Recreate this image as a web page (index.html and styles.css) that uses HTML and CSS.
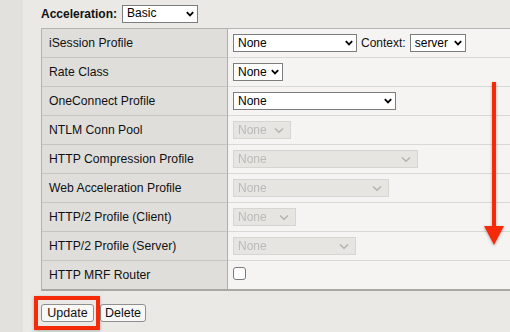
FILE: index.html
```html
<!DOCTYPE html>
<html>
<head>
<meta charset="utf-8">
<link rel="stylesheet" href="styles.css">
</head>
<body>
<div class="page">
  <div class="strip"></div>
  <div class="main">
    <div class="head">
      <span class="head-label">Acceleration:</span>
      <select class="sel w76 basic"><option>Basic</option></select>
    </div>
    <div class="grid">
      <div class="lbl">iSession Profile</div>
      <div class="val">
        <select class="sel w124"><option>None</option></select>
        <span class="ctx">Context:</span>
        <select class="sel w56"><option>server</option></select>
      </div>
      <div class="lbl">Rate Class</div>
      <div class="val"><select class="sel w50"><option>None</option></select></div>
      <div class="lbl">OneConnect Profile</div>
      <div class="val"><select class="sel w163"><option>None</option></select></div>
      <div class="lbl">NTLM Conn Pool</div>
      <div class="val"><select class="sel dis w58" disabled><option>None</option></select></div>
      <div class="lbl">HTTP Compression Profile</div>
      <div class="val"><select class="sel dis w185" disabled><option>None</option></select></div>
      <div class="lbl">Web Acceleration Profile</div>
      <div class="val"><select class="sel dis w156" disabled><option>None</option></select></div>
      <div class="lbl">HTTP/2 Profile (Client)</div>
      <div class="val"><select class="sel dis w63" disabled><option>None</option></select></div>
      <div class="lbl">HTTP/2 Profile (Server)</div>
      <div class="val"><select class="sel dis w123" disabled><option>None</option></select></div>
      <div class="lbl last">HTTP MRF Router</div>
      <div class="val last"><input type="checkbox" class="chk"></div>
    </div>
    <div class="buttons">
      <span class="highlight"><button class="btn w53">Update</button></span>
      <button class="btn w46">Delete</button>
    </div>
  </div>
  <svg class="arrow" width="24" height="168" viewBox="0 0 24 168">
    <rect x="10" y="0" width="4" height="146" fill="#f52a08"/>
    <polygon points="2,144 22,144 12,163" fill="#f52a08"/>
  </svg>
</div>
</body>
</html>
```
FILE: styles.css
```css
html, body {
  margin: 0;
  padding: 0;
  width: 510px;
  height: 332px;
  overflow: hidden;
  background: #eae9e5;
  font-family: "Liberation Sans", Arial, sans-serif;
  font-size: 12px;
  color: #111;
}
.page {
  position: relative;
  display: flex;
  height: 332px;
}
.strip {
  width: 23px;
  flex: none;
  background: #e2e1de;
}
.main {
  padding-left: 18px;
  flex: none;
}
.head {
  display: flex;
  align-items: center;
  gap: 5px;
  height: 18px;
  margin-top: 5px;
  margin-bottom: 5px;
}
.head-label {
  font-weight: bold;
  font-size: 12px;
}
.grid {
  display: grid;
  grid-template-columns: 186px 300px;
  border-top: 1px solid #b4b3af;
  border-left: 1px solid #b4b3af;
  border-bottom: 2px solid #a9a8a4;
  width: 486px;
}
.lbl, .val {
  height: 29px;
  box-sizing: border-box;
  display: flex;
  align-items: center;
}
.lbl {
  background: #dfdedb;
  padding-left: 7px;
  border-bottom: 1px solid #c6c5c1;
  border-right: 1px solid #aeada9;
  font-size: 12.2px;
}
.val {
  background: #f5f4f2;
  padding-left: 5px;
  border-bottom: 1px solid #d9d8d5;
  gap: 4px;
}
.lbl.last, .val.last { border-bottom: none; height: 28px; }
.sel {
  -webkit-appearance: none;
  appearance: none;
  box-sizing: border-box;
  height: 18px;
  margin: 0;
  padding: 0 12px 0 4px;
  border: 1px solid #7d7d7d;
  border-radius: 0;
  background-color: #fff;
  background-image: url("data:image/svg+xml;utf8,<svg xmlns='http://www.w3.org/2000/svg' width='8' height='6' viewBox='0 0 8 6'><path d='M0.8 1.2 L4 4.4 L7.2 1.2' fill='none' stroke='%23000' stroke-width='1.8'/></svg>");
  background-repeat: no-repeat;
  background-position: right 3px center;
  font-family: "Liberation Sans", Arial, sans-serif;
  font-size: 12px;
  color: #000;
  line-height: 16px;
}
.sel.basic { line-height: 12px; padding-bottom: 3px; }
.sel.dis {
  background-color: #e1dfdb;
  border-color: #cbc9c4;
  color: #a2a2a0;
  background-image: url("data:image/svg+xml;utf8,<svg xmlns='http://www.w3.org/2000/svg' width='10' height='7' viewBox='0 0 10 7'><path d='M1 1.5 L5 5.2 L9 1.5' fill='none' stroke='%23979794' stroke-width='1.4'/></svg>");
  background-position: right 6px center;
}
.w50 { width: 50px; }
.w53 { width: 53px; }
.w46 { width: 46px; }
.w56 { width: 56px; }
.w58 { width: 58px; }
.w63 { width: 63px; }
.w76 { width: 76px; }
.w123 { width: 123px; }
.w124 { width: 124px; }
.w156 { width: 156px; }
.w163 { width: 163px; }
.w185 { width: 185px; }
.ctx {
  font-size: 12px;
  color: #111;
}
.chk {
  -webkit-appearance: none;
  appearance: none;
  width: 13px;
  height: 13px;
  margin: 0 0 3px 0;
  border: 1px solid #7a7a7a;
  border-radius: 3px;
  background: #fff;
  box-sizing: border-box;
}
.buttons {
  display: flex;
  gap: 6px;
  margin-top: 13px;
}
.highlight {
  position: relative;
  display: inline-flex;
}
.highlight::after {
  content: "";
  position: absolute;
  left: -7px;
  top: -8px;
  right: -6px;
  bottom: -8px;
  border: 4px solid #f52a08;
  box-shadow: 0 1px 3px rgba(0,0,0,0.25);
}
.btn {
  box-sizing: border-box;
  height: 18px;
  padding: 0;
  border: 1px solid #8f8f8f;
  border-radius: 3px;
  background: #f8f8f7;
  font-family: "Liberation Sans", Arial, sans-serif;
  font-size: 12.5px;
  color: #111;
  line-height: 16px;
}
.arrow {
  position: absolute;
  left: 482px;
  top: 82px;
  filter: drop-shadow(0 1px 1.5px rgba(0,0,0,0.3));
}
```
